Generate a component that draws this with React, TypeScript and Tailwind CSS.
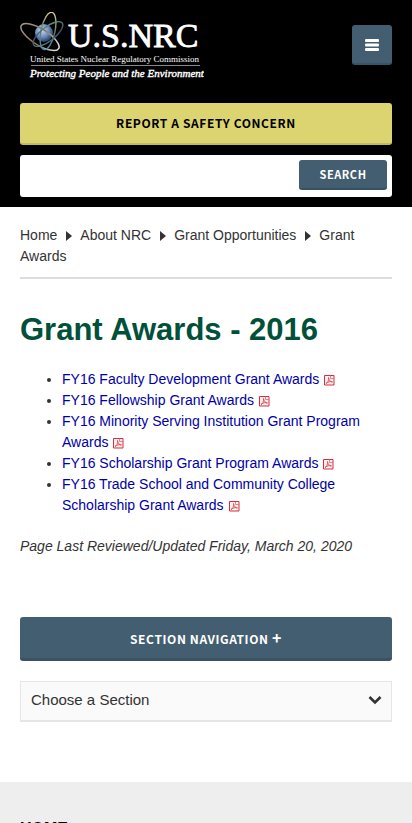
const crumbs = ["Home", "About NRC", "Grant Opportunities"];

const documents = [
  "FY16 Faculty Development Grant Awards",
  "FY16 Fellowship Grant Awards",
  "FY16 Minority Serving Institution Grant Program Awards",
  "FY16 Scholarship Grant Program Awards",
  "FY16 Trade School and Community College Scholarship Grant Awards",
];

const buttonFont = "font-['Noto_Sans_CJK_SC',sans-serif] font-bold uppercase";

function Logo() {
  return (
    <svg width="184" height="76" viewBox="0 0 184 76" role="img" aria-label="U.S.NRC">
      <defs>
        <radialGradient id="globe" cx="0.4" cy="0.35" r="0.7">
          <stop offset="0" stopColor="#c9daee" />
          <stop offset="0.5" stopColor="#7093c2" />
          <stop offset="1" stopColor="#1c3156" />
        </radialGradient>
        <linearGradient id="orbitA" x1="0" y1="0" x2="0" y2="1">
          <stop offset="0" stopColor="#dccf7d" />
          <stop offset="0.5" stopColor="#5f7a70" />
          <stop offset="1" stopColor="#4e8daf" />
        </linearGradient>
        <linearGradient id="orbitB" x1="0" y1="0" x2="1" y2="0">
          <stop offset="0" stopColor="#a79a94" />
          <stop offset="0.5" stopColor="#8b6a58" />
          <stop offset="1" stopColor="#e3e8e8" />
        </linearGradient>
        <linearGradient id="orbitC" x1="0" y1="1" x2="1" y2="0">
          <stop offset="0" stopColor="#51918d" />
          <stop offset="0.5" stopColor="#434a62" />
          <stop offset="1" stopColor="#5fa99c" />
        </linearGradient>
      </defs>
      <circle cx="24" cy="21" r="9" fill="url(#globe)" />
      <g fill="none" strokeWidth="1.4">
        <ellipse cx="20" cy="25" rx="22" ry="8" transform="rotate(32 20 25)" stroke="url(#orbitB)" />
        <ellipse cx="28" cy="19" rx="7" ry="19" transform="rotate(12 28 19)" stroke="url(#orbitA)" />
        <ellipse cx="28" cy="22" rx="18" ry="7" transform="rotate(-38 28 22)" stroke="url(#orbitC)" />
      </g>
      <g fill="#fff" fontFamily="'Liberation Serif', serif">
        <text x="48" y="35" fontSize="34" stroke="#fff" strokeWidth="0.8">U.S.NRC</text>
        <text x="10" y="50" fontSize="9">United States Nuclear Regulatory Commission</text>
        <text x="10" y="65" fontSize="11" fontStyle="italic" stroke="#fff" strokeWidth="0.4">
          Protecting People and the Environment
        </text>
      </g>
      <path d="M11 53.5h169" stroke="#888" />
    </svg>
  );
}

function PdfIcon() {
  return (
    <svg className="ml-px inline-block align-[-2px]" width="11" height="11" viewBox="0 0 11 11" role="img" aria-label="PDF">
      <path d="M0.500 0.500h9.500v9.500h-9.500z" fill="#fff0f0" stroke="#cf303c" />
      <path d="M6.500 0.500v3h3.500" fill="none" stroke="#de6a70" strokeWidth="0.8" />
      <path d="M2 8.500C3.500 8 5 5.500 4.500 2.500C5 5.500 6.500 7 8.500 7C6 6 4 7 2 8.500z" fill="none" stroke="#dc4951" strokeWidth="0.9" />
    </svg>
  );
}

export default function App() {
  return (
    <div className="flex h-screen flex-col overflow-hidden bg-white font-['Liberation_Sans',Arial,sans-serif] text-sm leading-[21px] text-[#333]">
      <header className="shrink-0 bg-black px-5 pb-2.5">
        <div className="flex items-start justify-between">
          <a href="#home" className="pt-3"><Logo /></a>
          <button type="button" aria-label="Menu" className="mt-[25px] flex size-10 items-center justify-center rounded-[3px] border-b-2 border-[#3a5364] bg-[#435e70]">
            <svg className="mt-0.5" width="14" height="12" viewBox="0 0 14 12" fill="#fff" aria-hidden="true">
              <rect width="14" height="3" rx="1" />
              <rect y="4.500" width="14" height="3" rx="1" />
              <rect y="9" width="14" height="3" rx="1" />
            </svg>
          </button>
        </div>
        <button type="button" className={`mt-[15px] block h-[42px] w-full rounded-[3px] border-b-2 border-[#c0bb63] bg-[#dbd470] text-xs tracking-wider text-black ${buttonFont}`}>
          Report a Safety Concern
        </button>
        <form className="mt-2.5 flex h-[42px] items-start rounded-[3px] bg-white p-[5px]">
          <input type="search" aria-label="Search NRC" className="h-8 min-w-0 flex-1 bg-white px-2 outline-none" />
          <button type="button" className={`h-[30px] w-[88px] rounded-[3px] border-b-2 border-[#36505f] bg-[#435e70] text-[11px] tracking-wider text-white ${buttonFont}`}>
            Search
          </button>
        </form>
      </header>

      <main className="shrink-0 px-5 pb-[60px]">
        <nav aria-label="Breadcrumb" className="border-b-2 border-[#ddd] pt-[18px] pb-2.5">
          {crumbs.map((crumb) => (
            <span key={crumb}>
              <a href="#crumb">{crumb}</a>
              <svg className="mr-2 ml-[9px] inline-block align-[-1px]" width="6" height="10" viewBox="0 0 6 10" fill="#333" aria-hidden="true">
                <path d="M0 0L6 5L0 10z" />
              </svg>
            </span>
          ))}
          <span>Grant Awards</span>
        </nav>
        <h1 className="mt-[33px] text-[31px] leading-9 font-bold text-[#00503a]">Grant Awards - 2016</h1>
        <ul className="mt-[21px] list-disc pl-[42px]">
          {documents.map((name) => (
            <li key={name}>
              <a href="#pdf" className="text-[#0000a8]">{name} <PdfIcon /></a>
            </li>
          ))}
        </ul>
        <p className="mt-5 italic">Page Last Reviewed/Updated Friday, March 20, 2020</p>
        <button type="button" className={`mt-[60px] block h-11 w-full rounded-[3px] border-b-[3px] border-[#3a5263] bg-[#435e70] text-xs tracking-wider text-white ${buttonFont}`}>
          Section Navigation <span className="text-base leading-none">+</span>
        </button>
        <div className="mt-5 grid">
          <select aria-label="Choose a Section" className="col-start-1 row-start-1 h-[41px] w-full appearance-none rounded-none border border-b-2 border-[#e6e6e6] bg-[#fafafa] px-2.5 pb-1 text-[15px]">
            <option>Choose a Section</option>
          </select>
          <svg className="pointer-events-none col-start-1 row-start-1 mr-2.5 mb-1 self-center justify-self-end" width="14" height="10" viewBox="0 0 14 10" fill="none" stroke="#333" strokeWidth="2.600" aria-hidden="true">
            <path d="M1.500 2L7 7.500L12.500 2" />
          </svg>
        </div>
      </main>

      <footer className="min-h-0 flex-1 bg-[#eee] px-5 pt-[35px]">
        <h2 className="text-base leading-6 font-bold text-black uppercase">Home</h2>
      </footer>
    </div>
  );
}
